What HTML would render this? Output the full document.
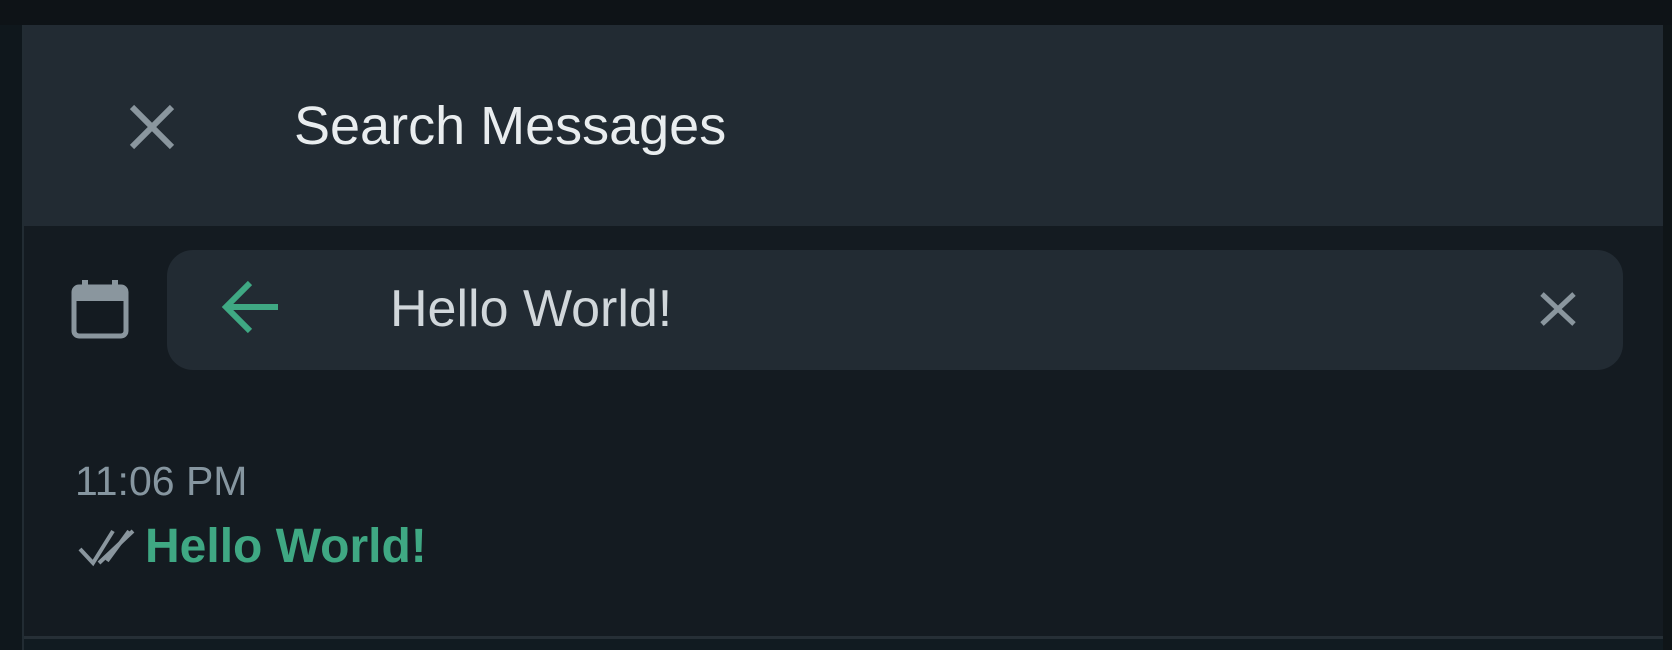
<!DOCTYPE html>
<html><head><meta charset="utf-8"><style>
html,body{margin:0;padding:0;width:1672px;height:650px;overflow:hidden;background:#111b21;font-family:"Liberation Sans",sans-serif}
.abs{position:absolute}
</style></head><body>
<div class="abs" style="left:0;top:0;width:1672px;height:25px;background:#0e1317"></div>
<div class="abs" style="left:0;top:25px;width:22px;height:625px;background:#0f171c"></div>
<div class="abs" style="left:22px;top:25px;width:2px;height:625px;background:#222c33"></div>
<div class="abs" style="left:1663px;top:25px;width:9px;height:625px;background:#0f1518"></div>
<div class="abs" style="left:24px;top:25px;width:1639px;height:201px;background:#222b33"></div>
<div class="abs" style="left:24px;top:226px;width:1639px;height:411px;background:#141b21"></div>
<div class="abs" style="left:24px;top:636px;width:1639px;height:3px;background:#262f36"></div>
<svg class="abs" style="left:128px;top:103px" width="48" height="48" viewBox="0 0 48 48"><path d="M4 4L44 44M44 4L4 44" stroke="#8a969e" stroke-width="6"/></svg>
<div class="abs" style="left:294px;top:96px;font-size:54px;color:#e9edef;line-height:60px;white-space:nowrap">Search Messages</div>
<svg class="abs" style="left:70px;top:277px" width="60" height="63" viewBox="0 0 60 63"><rect x="4" y="10" width="52" height="49" rx="5" fill="none" stroke="#8a969e" stroke-width="5"/><rect x="4" y="10" width="52" height="14" fill="#8a969e"/><rect x="12" y="3" width="6" height="10" fill="#8a969e"/><rect x="42" y="3" width="6" height="10" fill="#8a969e"/></svg>
<div class="abs" style="left:167px;top:250px;width:1456px;height:120px;border-radius:26px;background:#222b33"></div>
<svg class="abs" style="left:220px;top:278px" width="62" height="60" viewBox="0 0 62 60"><path d="M58 29H8M30 5L6 29L30 53" fill="none" stroke="#3fa883" stroke-width="6"/></svg>
<div class="abs" style="left:390px;top:279px;font-size:52px;color:#d1d7db;line-height:60px;white-space:nowrap">Hello World!</div>
<svg class="abs" style="left:1539px;top:291px" width="38" height="36" viewBox="0 0 38 36"><path d="M3 3L35 33M35 3L3 33" stroke="#8a969e" stroke-width="5"/></svg>
<div class="abs" style="left:75px;top:456px;font-size:41px;color:#8696a0;line-height:50px;white-space:nowrap">11:06 PM</div>
<svg class="abs" style="left:77px;top:527px" width="60" height="40" viewBox="0 0 60 40"><path d="M3 22L16 36L36 4M22 36L56 4" fill="none" stroke="#8a969e" stroke-width="4"/><path d="M30 34L52 4" fill="none" stroke="#8a969e" stroke-width="4"/></svg>
<div class="abs" style="left:145px;top:520px;font-size:48px;font-weight:bold;color:#3fa883;line-height:54px;white-space:nowrap">Hello World!</div>
</body></html>
